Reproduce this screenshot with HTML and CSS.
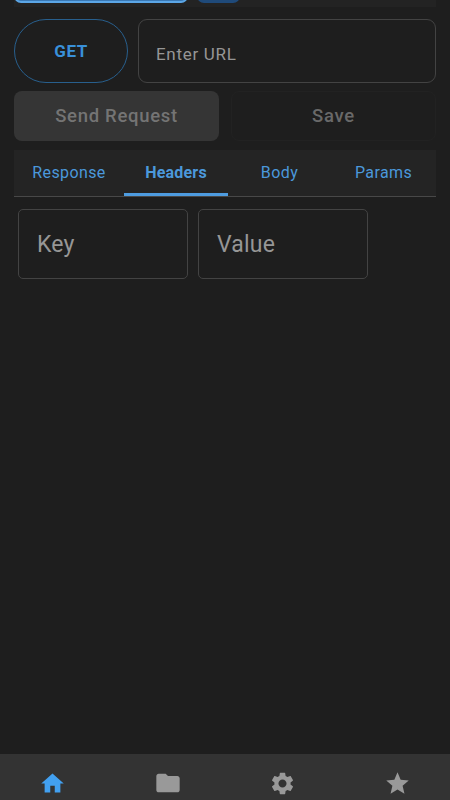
FILE: index.html
```html
<!DOCTYPE html>
<html lang="en">
<head>
  <meta charset="UTF-8">
  <meta name="viewport" content="width=device-width, initial-scale=1">
  <title>API Client</title>
  <link rel="stylesheet" href="styles.css">
</head>
<body>

  <main>
    <div class="request-tabs">
      <div class="request-tab active"></div>
      <div class="request-tab add"></div>
    </div>

    <div class="url-row">
      <button class="method">GET</button>
      <label class="field url">Enter URL</label>
    </div>

    <div class="actions">
      <button class="send" disabled>Send Request</button>
      <button class="save" disabled>Save</button>
    </div>

    <nav class="tabs">
      <a class="tab">Response</a>
      <a class="tab active">Headers</a>
      <a class="tab">Body</a>
      <a class="tab">Params</a>
    </nav>

    <div class="header-row">
      <label class="field">Key</label>
      <label class="field">Value</label>
    </div>
  </main>

  <footer class="bottom-nav">
    <a class="active">
      <svg width="27" height="27" viewBox="0 0 24 24"><path d="M10 20v-6h4v6h5v-8h3L12 3 2 12h3v8z"/></svg>
    </a>
    <a>
      <svg width="28" height="28" viewBox="0 0 24 24"><path d="M10 4H4c-1.100 0-1.990.9-1.990 2L2 18c0 1.100.9 2 2 2h16c1.100 0 2-.9 2-2V8c0-1.100-.9-2-2-2h-8l-2-2z"/></svg>
    </a>
    <a>
      <svg width="27" height="27" viewBox="0 0 24 24"><path d="M19.140 12.940c.04-.3.06-.61.06-.94 0-.32-.02-.64-.07-.94l2.030-1.580c.18-.14.23-.41.12-.61l-1.920-3.320c-.12-.22-.37-.29-.59-.22l-2.390.96c-.5-.38-1.030-.7-1.620-.94l-.36-2.540c-.04-.24-.24-.41-.48-.41h-3.840c-.24 0-.43.17-.47.41l-.36 2.540c-.59.24-1.130.57-1.620.94l-2.390-.96c-.22-.08-.47 0-.59.22L2.740 8.870c-.12.21-.08.47.12.61l2.030 1.580c-.05.3-.09.63-.09.94s.02.64.07.94l-2.030 1.580c-.18.14-.23.41-.12.61l1.920 3.320c.12.22.37.29.59.22l2.390-.96c.5.38 1.030.7 1.620.94l.36 2.540c.05.24.24.41.48.41h3.840c.24 0 .44-.17.47-.41l.36-2.540c.59-.24 1.130-.56 1.620-.94l2.390.96c.22.08.47 0 .59-.22l1.920-3.320c.12-.22.07-.47-.12-.61l-2.010-1.580zM12 15.600c-1.980 0-3.600-1.620-3.600-3.600s1.620-3.600 3.600-3.600 3.600 1.620 3.600 3.600-1.620 3.600-3.600 3.600z"/></svg>
    </a>
    <a>
      <svg width="27" height="27" viewBox="0 0 24 24"><path d="M12 17.270 18.180 21l-1.640-7.030L22 9.240l-7.190-.61L12 2 9.190 8.630 2 9.240l5.460 4.730L5.820 21z"/></svg>
    </a>
  </footer>

</body>
</html>
```

FILE: styles.css
```css
* {
  box-sizing: border-box;
}

body {
  margin: 0;
  height: 100vh;
  display: flex;
  flex-direction: column;
  overflow: hidden;
  background: #1e1e1e;
  font-family: Roboto, sans-serif;
}

main {
  flex: 1;
  padding: 0 14px;
}

button {
  font-family: inherit;
  padding: 0;
}

/* scrolled partly off the top of the screen */
.request-tabs {
  display: flex;
  gap: 9px;
  height: 27px;
  margin-top: -20px;
  background: #232323;
}

.request-tab {
  height: 23px;
  border-radius: 7px;
}

.request-tab.active {
  width: 174px;
  background: #3a78b4;
  border: 2px solid #5ba6e6;
}

.request-tab.add {
  width: 43px;
  background: #1f4a7a;
}

.url-row {
  display: flex;
  gap: 10px;
  margin-top: 12px;
}

.method {
  width: 114px;
  height: 64px;
  border: 1px solid #285f8d;
  border-radius: 32px;
  background: none;
  color: #3990d9;
  font-size: 17px;
  font-weight: 700;
  letter-spacing: 0.5px;
}

.field {
  display: flex;
  align-items: center;
  width: 170px;
  height: 70px;
  padding-left: 18px;
  border: 1px solid #434343;
  border-radius: 5px;
  color: #969696;
  font-size: 23px;
  letter-spacing: 0.2px;
}

.field.url {
  flex: 1;
  height: 64px;
  padding-top: 6px;
  padding-left: 17px;
  border-radius: 9px;
  font-size: 17px;
  letter-spacing: 0.7px;
}

.actions {
  display: flex;
  gap: 12px;
  margin-top: 8px;
}

.actions button {
  height: 50px;
  border-radius: 8px;
  font-size: 18.500px;
  font-weight: 500;
  letter-spacing: 0.7px;
}

.send {
  width: 205px;
  border: none;
  background: #353535;
  color: #747474;
}

.save {
  flex: 1;
  border: 1px solid #222;
  background: none;
  color: #696969;
}

.tabs {
  display: grid;
  grid-template-columns: 110px 104px 103px 105px;
  height: 47px;
  margin-top: 9px;
  border-bottom: 1px solid #484848;
  background: #242424;
}

.tab {
  display: flex;
  align-items: center;
  justify-content: center;
  height: 46px;
  padding-bottom: 2px;
  color: #4b98db;
  font-size: 16px;
  letter-spacing: 0.4px;
}

.tab.active {
  border-top: 3px solid transparent;
  border-bottom: 3px solid #4e9ce0;
  font-weight: 700;
  letter-spacing: 0.2px;
}

.header-row {
  display: flex;
  gap: 10px;
  padding: 12px 4px;
}

.bottom-nav {
  display: flex;
  justify-content: space-between;
  height: 46px;
  padding: 13px 23px 0;
  background: #333;
}

.bottom-nav a {
  display: flex;
  align-items: center;
  justify-content: center;
  width: 59px;
  height: 32px;
}

.bottom-nav svg {
  flex: none;
  fill: #999;
}

.bottom-nav .active svg {
  fill: #42a0f0;
}
```
